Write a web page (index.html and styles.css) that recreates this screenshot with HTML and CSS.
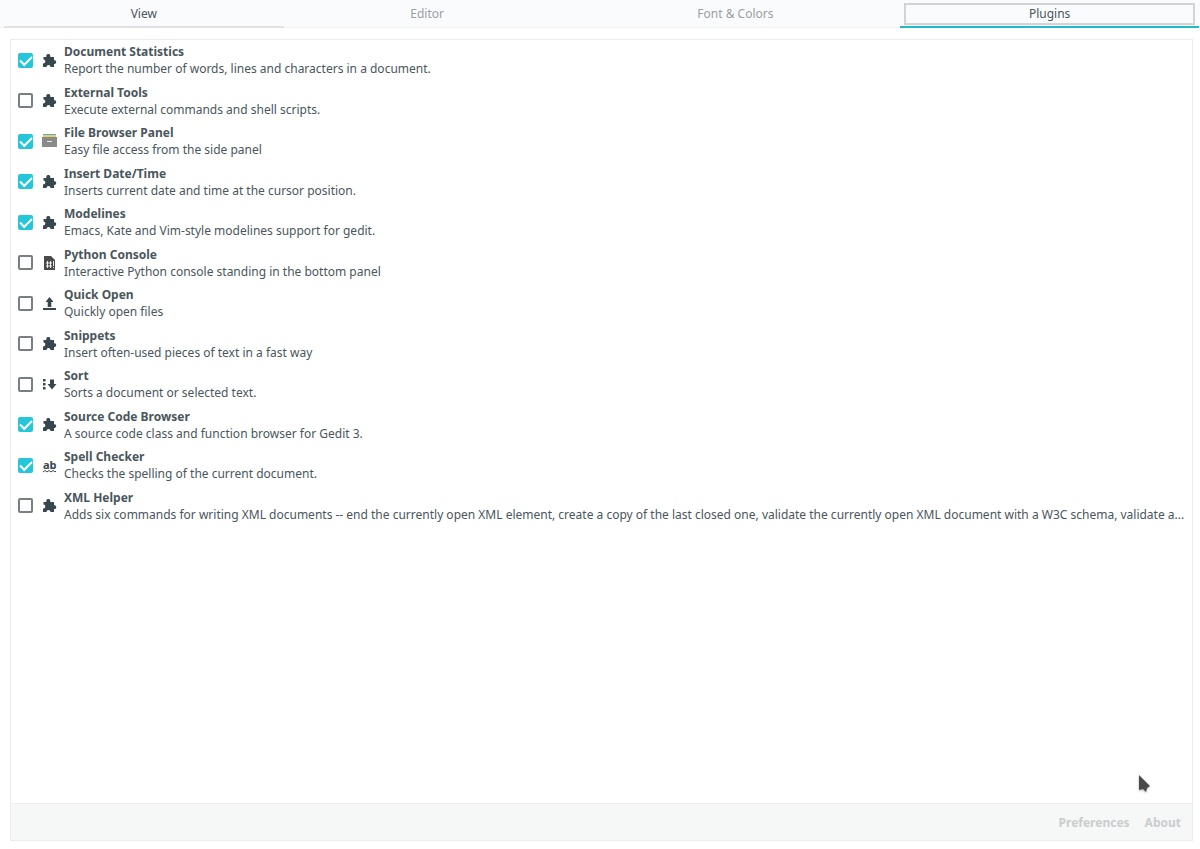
FILE: index.html
```html
<!DOCTYPE html>
<html lang="en">
<head>
    <meta charset="UTF-8">
    <meta name="viewport" content="width=device-width, initial-scale=1.0">
    <title>Preferences</title>
    <link rel="stylesheet" href="styles.css">
</head>
<body>
    <svg class="sprite" aria-hidden="true">
        <symbol id="puzzle" viewBox="0 0 15 15">
            <path d="M1.500 4H4.300V3C4.300 .4 8.300 .4 8.300 3v1H12v3.300h.6c2.200 0 2.200 3.700 0 3.700H12v3H8.500c0-2.700-4-2.700-4 0H1v-3.400c3 0 3-4 .5-4z"/>
        </symbol>
        <symbol id="drawer" viewBox="0 0 15 15">
            <path fill="#5aa9e0" d="M1 0h13v2H1z"/>
            <path fill="#e5d253" d="M1 1h13v2H1z"/>
            <path fill="#8a8a8a" d="M0 3h15v10H0z"/>
            <path fill="#e8e8e8" d="M5 7h5v1H5z"/>
        </symbol>
        <symbol id="script" viewBox="0 0 15 15">
            <path fill="#4a4a4a" d="M2 1h7l4 4v10H2z"/>
            <path fill="none" stroke="#fff" stroke-width=".9" d="M5.500 6v7M8.500 6v7M4 8h6M4 11h6M11.500 6v5M11.500 12v1"/>
        </symbol>
        <symbol id="upload" viewBox="0 0 15 15">
            <path d="M7.500 1l4 5H9.300v5H5.700V6H3.500zM1 12h13v2H1z"/>
        </symbol>
        <symbol id="sort" viewBox="0 0 15 15">
            <path d="M1 2h2.500v2.500H1zM1 6h2.500v2.500H1zM1 10h2.500v2.500H1zM8 2.500h4V7h2.500L10 12.500 5.500 7H8z"/>
        </symbol>
        <symbol id="spell" viewBox="0 0 15 15">
            <text x="1" y="11" class="ab">ab</text>
            <path fill="none" stroke="#37474f" d="M1 14l2-1.500 2 1.500 2-1.500 2 1.500 2-1.500 2 1.500 1-1"/>
        </symbol>
    </svg>

    <nav class="tabs">
        <button class="tab hovered">View</button>
        <button class="tab">Editor</button>
        <button class="tab">Font &amp; Colors</button>
        <button class="tab active"><span>Plugins</span></button>
    </nav>

    <main class="panel">
        <ul class="plugin-list">
            <li><label class="plugin">
                <input type="checkbox" checked>
                <svg class="icon"><use href="#puzzle"/></svg>
                <span class="info"><b>Document Statistics</b><span>Report the number of words, lines and characters in a document.</span></span>
            </label></li>
            <li><label class="plugin">
                <input type="checkbox">
                <svg class="icon"><use href="#puzzle"/></svg>
                <span class="info"><b>External Tools</b><span>Execute external commands and shell scripts.</span></span>
            </label></li>
            <li><label class="plugin">
                <input type="checkbox" checked>
                <svg class="icon"><use href="#drawer"/></svg>
                <span class="info"><b>File Browser Panel</b><span>Easy file access from the side panel</span></span>
            </label></li>
            <li><label class="plugin">
                <input type="checkbox" checked>
                <svg class="icon"><use href="#puzzle"/></svg>
                <span class="info"><b>Insert Date/Time</b><span>Inserts current date and time at the cursor position.</span></span>
            </label></li>
            <li><label class="plugin">
                <input type="checkbox" checked>
                <svg class="icon"><use href="#puzzle"/></svg>
                <span class="info"><b>Modelines</b><span>Emacs, Kate and Vim-style modelines support for gedit.</span></span>
            </label></li>
            <li><label class="plugin">
                <input type="checkbox">
                <svg class="icon"><use href="#script"/></svg>
                <span class="info"><b>Python Console</b><span>Interactive Python console standing in the bottom panel</span></span>
            </label></li>
            <li><label class="plugin">
                <input type="checkbox">
                <svg class="icon"><use href="#upload"/></svg>
                <span class="info"><b>Quick Open</b><span>Quickly open files</span></span>
            </label></li>
            <li><label class="plugin">
                <input type="checkbox">
                <svg class="icon"><use href="#puzzle"/></svg>
                <span class="info"><b>Snippets</b><span>Insert often-used pieces of text in a fast way</span></span>
            </label></li>
            <li><label class="plugin">
                <input type="checkbox">
                <svg class="icon"><use href="#sort"/></svg>
                <span class="info"><b>Sort</b><span>Sorts a document or selected text.</span></span>
            </label></li>
            <li><label class="plugin">
                <input type="checkbox" checked>
                <svg class="icon"><use href="#puzzle"/></svg>
                <span class="info"><b>Source Code Browser</b><span>A source code class and function browser for Gedit 3.</span></span>
            </label></li>
            <li><label class="plugin">
                <input type="checkbox" checked>
                <svg class="icon"><use href="#spell"/></svg>
                <span class="info"><b>Spell Checker</b><span>Checks the spelling of the current document.</span></span>
            </label></li>
            <li><label class="plugin">
                <input type="checkbox">
                <svg class="icon"><use href="#puzzle"/></svg>
                <span class="info"><b>XML Helper</b><span>Adds six commands for writing XML documents -- end the currently open XML element, create a copy of the last closed one, validate the currently open XML document with a W3C schema, validate a...</span></span>
            </label></li>
        </ul>
        <footer class="toolbar">
            <button disabled>Preferences</button>
            <button disabled>About</button>
        </footer>
    </main>

    <svg class="pointer" viewBox="0 0 12 20" aria-hidden="true"><path d="M1 1v15l4-1 3 3 1-4 3-2z"/></svg>
</body>
</html>
```
FILE: styles.css
```css
* {
    margin: 0;
    padding: 0;
    box-sizing: border-box;
}

body {
    display: flex;
    flex-direction: column;
    min-height: 100vh;
    background: white;
    color: #49565c;
    font-family: "Noto Sans", sans-serif;
    font-size: 12px;
    line-height: 18px;
}

button {
    border: none;
    background: none;
    color: inherit;
    font: inherit;
}

.sprite {
    display: none;
}

.tabs {
    display: flex;
    height: 28px;
    padding: 0 1px 0 4px;
    background: #fafbfd;
    box-shadow: inset 0 -1px #f1f1f2;
}

.tab {
    flex: 1 1 auto;
    display: flex;
    align-items: center;
    justify-content: center;
    padding: 2px 4px 1px;
    border-bottom: 2px solid transparent;
    color: #999fa3;
}

.tab.hovered {
    border-bottom-color: #e0e1e2;
    color: #49565c;
}

.tab.active {
    border-bottom-color: #22b9ce;
    color: #49565c;
}

.tab span {
    flex: 1;
    border: 2px solid #d2d5d7;
}

.panel {
    flex: 1;
    display: flex;
    flex-direction: column;
    margin: 11px 7px 8px 10px;
    border: 1px solid #ececec;
}

.plugin-list {
    display: grid;
    grid-template-columns: minmax(0, 1fr);
    grid-auto-rows: 1fr;
    min-height: 486px;
    margin-bottom: auto;
    list-style: none;
}

.plugin {
    display: flex;
    align-items: center;
    height: 100%;
    padding: 0 3px 0 7px;
}

.plugin input {
    appearance: none;
    flex: none;
    width: 15px;
    height: 15px;
    border: 2px solid #787f83;
    border-radius: 2px;
}

.plugin input:checked {
    border: none;
    background: #26c6da;
}

.plugin input:checked::before {
    content: "";
    display: block;
    width: 10px;
    height: 5px;
    margin: 4px auto;
    border: solid white;
    border-width: 0 0 2px 2px;
    transform: translateY(-1px) rotate(-45deg);
}

.icon {
    flex: none;
    width: 15px;
    height: 15px;
    margin: 0 7px 0 9px;
    fill: #37474f;
}

.ab {
    font-size: 11px;
    font-weight: bold;
}

.info {
    flex: 1;
    min-width: 0;
    line-height: 17px;
}

.info b,
.info span {
    display: block;
    overflow: hidden;
    text-overflow: ellipsis;
    white-space: nowrap;
}

.toolbar {
    display: flex;
    justify-content: flex-end;
    gap: 15px;
    padding: 10px 11px 8px;
    border-top: 1px solid #ebedec;
    background: #f6f8f8;
}

.toolbar button {
    color: #c9cdce;
    font-weight: bold;
}

.pointer {
    position: absolute;
    right: 50px;
    bottom: 55px;
    width: 12px;
    height: 20px;
    fill: #4a4a4a;
    filter: drop-shadow(0 1px 1px rgba(0, 0, 0, 0.3));
}
```
